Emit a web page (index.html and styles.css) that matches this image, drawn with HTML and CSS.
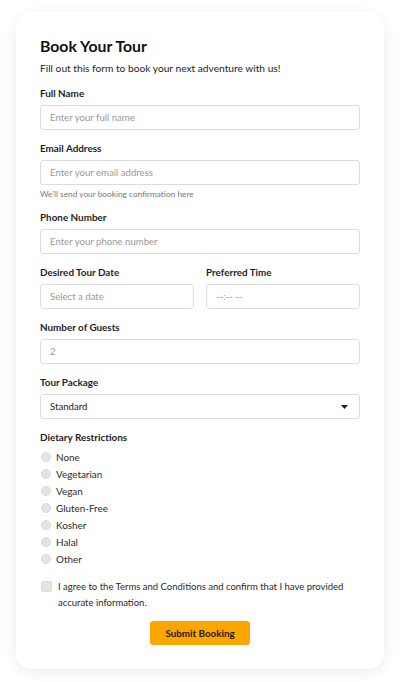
FILE: index.html
```html
<!DOCTYPE html>
<html lang="en">
<head>
<meta charset="utf-8">
<title>Book Your Tour</title>
<link rel="stylesheet" href="styles.css">
</head>
<body>
<div class="page">
  <form class="card">
    <h1 class="title">Book Your Tour</h1>
    <p class="subtitle">Fill out this form to book your next adventure with us!</p>

    <div class="field">
      <label class="label" for="name">Full Name</label>
      <input class="input" id="name" type="text" placeholder="Enter your full name">
    </div>

    <div class="field">
      <label class="label" for="email">Email Address</label>
      <input class="input" id="email" type="text" placeholder="Enter your email address">
      <div class="hint">We'll send your booking confirmation here</div>
    </div>

    <div class="field">
      <label class="label" for="phone">Phone Number</label>
      <input class="input" id="phone" type="text" placeholder="Enter your phone number">
    </div>

    <div class="row">
      <div class="field">
        <label class="label" for="date">Desired Tour Date</label>
        <input class="input" id="date" type="text" placeholder="Select a date">
      </div>
      <div class="field">
        <label class="label" for="time">Preferred Time</label>
        <input class="input" id="time" type="text" placeholder="--:-- --">
      </div>
    </div>

    <div class="field">
      <label class="label" for="guests">Number of Guests</label>
      <input class="input" id="guests" type="text" placeholder="2">
    </div>

    <div class="field">
      <label class="label" for="package">Tour Package</label>
      <div class="select-wrap">
        <select class="input select" id="package">
          <option>Standard</option>
          <option>Premium</option>
          <option>Deluxe</option>
        </select>
        <svg class="caret" width="7" height="4" viewBox="0 0 7 4"><path d="M0 0H7L3.5 4Z" fill="#222"/></svg>
      </div>
    </div>

    <div class="field">
      <div class="label">Dietary Restrictions</div>
      <div class="radios">
        <label class="radio"><input type="radio" name="diet"><span>None</span></label>
        <label class="radio"><input type="radio" name="diet"><span>Vegetarian</span></label>
        <label class="radio"><input type="radio" name="diet"><span>Vegan</span></label>
        <label class="radio"><input type="radio" name="diet"><span>Gluten-Free</span></label>
        <label class="radio"><input type="radio" name="diet"><span>Kosher</span></label>
        <label class="radio"><input type="radio" name="diet"><span>Halal</span></label>
        <label class="radio"><input type="radio" name="diet"><span>Other</span></label>
      </div>
    </div>

    <label class="agree"><input type="checkbox"><span>I agree to the Terms and Conditions and confirm that I have provided accurate information.</span></label>

    <div class="actions">
      <button class="submit" type="button">Submit Booking</button>
    </div>
  </form>
</div>
</body>
</html>
```

FILE: styles.css
```css
* { box-sizing: border-box; }
html, body { margin: 0; padding: 0; background: #fff; }
body {
  font-family: "Lato", "Open Sans", sans-serif;
  color: #222;
}
.page {
  padding: 12px 16px 12px;
}
.card {
  background: #fff;
  border-radius: 16px;
  box-shadow: 0 3px 14px rgba(0, 0, 0, 0.08);
  padding: 24px 24px 24px;
}
.title {
  margin: 0 0 5px;
  font-size: 15.8px;
  line-height: 20px;
  font-weight: 700;
  color: #111;
}
.subtitle {
  margin: 0 0 12px;
  font-size: 10.2px;
  line-height: 14px;
  color: #1e1e1e;
}
.field {
  margin-bottom: 12px;
  min-width: 0;
}
.label {
  display: block;
  font-size: 9.9px;
  line-height: 13px;
  font-weight: 700;
  color: #1e1e1e;
  margin-bottom: 5px;
}
.input {
  display: block;
  width: 100%;
  height: 25px;
  margin: 0;
  padding: 0 9px;
  border: 1px solid #dcdcdc;
  border-radius: 3px;
  font-family: inherit;
  font-size: 9.6px;
  color: #333;
  background: #fff;
  outline: none;
}
.input::placeholder { color: #999; }
.hint {
  margin-top: 4px;
  font-size: 8.3px;
  line-height: 10px;
  color: #777;
}
.row {
  display: grid;
  grid-template-columns: 1fr 1fr;
  column-gap: 12px;
}
.select-wrap { position: relative; }
.select {
  appearance: none;
  -webkit-appearance: none;
  color: #222;
}
.caret {
  position: absolute;
  right: 12px;
  top: 11px;
  pointer-events: none;
}
.field .label + .radios { margin-top: -1px; }
.radios { display: flex; flex-direction: column; }
.radio {
  display: flex;
  align-items: center;
  height: 17px;
  font-size: 9.9px;
  color: #2a2a2a;
}
.radio input {
  appearance: none;
  -webkit-appearance: none;
  width: 10px;
  height: 10px;
  margin: 0 5px 0 1px;
  border-radius: 50%;
  background: #e4e4e4;
  border: 1px solid #dadada;
  flex: none;
}
.agree {
  display: flex;
  align-items: flex-start;
  margin-top: 12px;
  font-size: 9.5px;
  line-height: 15.6px;
  color: #2a2a2a;
}
.agree input {
  appearance: none;
  -webkit-appearance: none;
  width: 11px;
  height: 11px;
  margin: 2px 6px 0 1px;
  border-radius: 2px;
  background: #e4e4e4;
  border: 1px solid #dadada;
  flex: none;
}
.actions {
  display: flex;
  justify-content: center;
  margin-top: 11px;
}
.submit {
  height: 24px;
  padding: 0 15px;
  border: none;
  border-radius: 3px;
  background: #ffa500;
  color: #1a1a1a;
  font-family: inherit;
  font-size: 9.8px;
  font-weight: 700;
}
```
